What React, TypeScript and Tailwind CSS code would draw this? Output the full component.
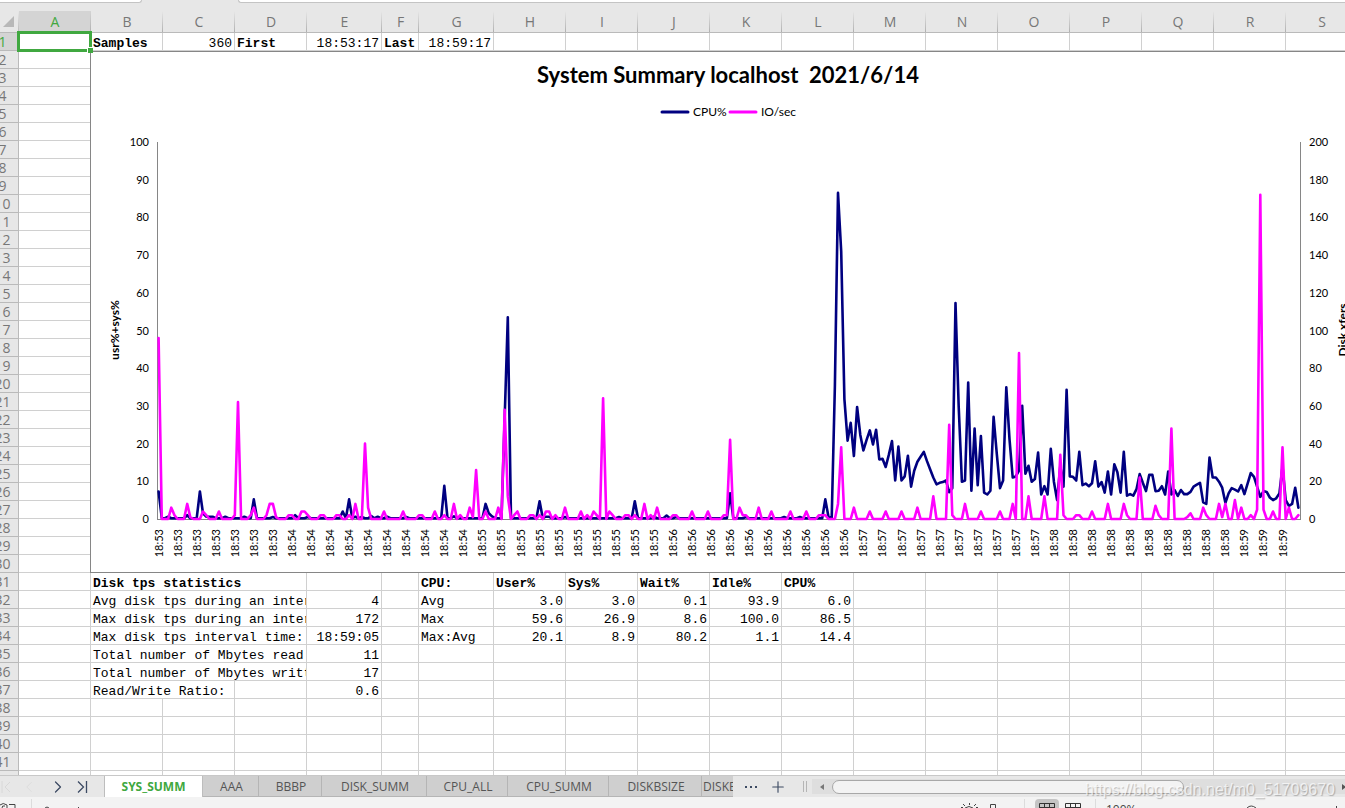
import { ReactNode } from "react";
import { ChevronLeft, ChevronRight, Plus } from "lucide-react";

const COLUMNS = [
  { name: "A", width: "w-[72px]" },
  { name: "B", width: "w-[72px]" },
  { name: "C", width: "w-[72px]" },
  { name: "D", width: "w-[72px]" },
  { name: "E", width: "w-[75px]" },
  { name: "F", width: "w-[37px]" },
  { name: "G", width: "w-[75px]" },
  ..."HIJKLMNOPQRS".split("").map((name) => ({ name, width: "w-[72px]" })),
];

const ROW_COUNT = 42;

type Cell = {
  text: string;
  bold?: boolean;
  right?: boolean;
  span?: number;
};

const label = (text: string, span = 1): Cell => ({ text, span });
const head = (text: string, span = 1): Cell => ({ text, span, bold: true });
const num = (text: string): Cell => ({ text, right: true });

const CELLS: Record<string, Cell> = {
  B1: head("Samples"),
  C1: num("360"),
  D1: head("First"),
  E1: num("18:53:17"),
  F1: head("Last"),
  G1: num("18:59:17"),

  B31: head("Disk tps statistics", 3),
  B32: label("Avg disk tps during an interval:", 3),
  E32: num("4"),
  B33: label("Max disk tps during an interval:", 3),
  E33: num("172"),
  B34: label("Max disk tps interval time:", 3),
  E34: num("18:59:05"),
  B35: label("Total number of Mbytes read:", 3),
  E35: num("11"),
  B36: label("Total number of Mbytes written:", 3),
  E36: num("17"),
  B37: label("Read/Write Ratio:", 2),
  E37: num("0.6"),

  G31: head("CPU:"),
  H31: head("User%"),
  I31: head("Sys%"),
  J31: head("Wait%"),
  K31: head("Idle%"),
  L31: head("CPU%"),
  G32: label("Avg"),
  H32: num("3.0"),
  I32: num("3.0"),
  J32: num("0.1"),
  K32: num("93.9"),
  L32: num("6.0"),
  G33: label("Max"),
  H33: num("59.6"),
  I33: num("26.9"),
  J33: num("8.6"),
  K33: num("100.0"),
  L33: num("86.5"),
  G34: label("Max:Avg"),
  H34: num("20.1"),
  I34: num("8.9"),
  J34: num("80.2"),
  K34: num("1.1"),
  L34: num("14.4"),
};

const SAMPLES = 360;

// transfers per second, only the samples that are not zero
const IO: Record<number, number> = {
  0: 96, 4: 6, 5: 2, 9: 8, 10: 1, 14: 4, 15: 2, 19: 4, 24: 2, 25: 62, 29: 2,
  30: 6, 34: 2, 35: 8, 36: 8, 37: 1, 41: 2, 42: 2, 45: 4, 46: 4, 47: 2, 51: 2,
  52: 2, 56: 2, 57: 2, 60: 2, 62: 8, 65: 40, 66: 6, 71: 4, 77: 4, 82: 2,
  83: 2, 87: 4, 90: 2, 93: 8, 95: 2, 98: 6, 99: 1, 100: 26, 103: 4, 107: 6,
  109: 58, 110: 12, 112: 2, 113: 4, 117: 2, 118: 2, 120: 2, 122: 4, 123: 4,
  125: 2, 128: 6, 133: 4, 135: 2, 137: 4, 138: 2, 140: 64, 142: 4, 143: 2,
  147: 2, 148: 2, 150: 2, 153: 8, 155: 2, 157: 6, 162: 2, 163: 2, 168: 4,
  173: 4, 178: 2, 179: 2, 180: 42, 183: 6, 184: 2, 185: 2, 189: 6, 193: 4,
  199: 4, 204: 4, 208: 2, 209: 2, 210: 2, 214: 8, 215: 38, 219: 6, 224: 4,
  229: 4, 234: 4, 239: 6, 244: 12, 249: 50, 250: 2, 254: 8, 259: 4, 265: 4,
  269: 8, 271: 88, 274: 12, 279: 12, 284: 34, 285: 2, 289: 2, 290: 2, 294: 4,
  299: 8, 304: 8, 305: 2, 309: 22, 314: 7, 315: 2, 319: 48, 324: 1, 325: 3,
  329: 6, 330: 2, 334: 8, 335: 1, 336: 8, 339: 10, 341: 6, 344: 2, 346: 5,
  347: 172, 348: 5, 351: 4, 354: 38, 356: 6, 359: 2,
};

// idle part of the run: the box sits near zero apart from these samples
const CPU_QUIET: Record<number, number> = {
  0: 7.3, 3: 0.6, 9: 1, 13: 7.3, 14: 1.5, 15: 0.6, 16: 0.6, 17: 0.6, 21: 0.6,
  27: 0.6, 30: 5.2, 36: 0.5, 43: 1, 47: 0.5, 58: 2, 60: 5.2, 62: 0.6, 64: 0.5,
  67: 0.8, 69: 0.6, 72: 0.6, 78: 0.5, 90: 8.8, 93: 0.7, 103: 4, 104: 1.5,
  105: 0.7, 109: 27, 110: 53.5, 120: 4.7, 122: 0.6, 123: 0.6, 128: 0.5,
  145: 0.5, 150: 4.7, 156: 0.6, 160: 0.9, 163: 0.5, 180: 6.8, 185: 0.5,
  197: 0.5, 202: 0.5, 210: 5.2, 211: 0.5,
};

// load starts at sample 213
const BUSY_START = 213;
const CPU_BUSY = [
  35.4, 86.5, 71, 31.8, 20.8, 25.5, 16.7, 29.7, 22.3, 18.2, 21, 23.5, 19.8,
  23.7, 15.8, 16, 13.8, 17, 20.7, 10.2, 19.2, 10.2, 11.3, 16.8, 8.6, 12.8,
  15.2, 16.5, 17.8, 15.4, 13.2, 11, 9.2, 9.6, 9.8, 10.2, 7.1, 8.2, 57.3, 29.8,
  9.9, 10.2, 36.2, 7.5, 24, 9, 22, 7, 6.5, 7.5, 27.1, 17.3, 8.2, 10.2, 34.9,
  21.2, 11, 11.3, 12.8, 30, 12, 14.1, 9.9, 10.6, 17.6, 6.5, 8.7, 6.5, 18.6,
  9.9, 5, 14, 8.6, 34.3, 11.3, 11.2, 10.2, 17.8, 9, 9.4, 8.7, 9.5, 15.3, 8.6,
  9.8, 7, 12.6, 6.5, 14.5, 12.4, 7, 17.8, 6.2, 6.6, 6.2, 7.9, 11.9, 9.6, 7.4,
  11.7, 11.7, 7.4, 7.5, 8.7, 6.5, 12.6, 6.5, 7.7, 6.1, 7.7, 6.6, 6.6, 7.2,
  8.6, 9.1, 9.6, 4.4, 4, 16.3, 11, 11, 9.9, 8.3, 4.3, 6.8, 8.2, 7.8, 7.3, 9,
  6.6, 9.4, 12.2, 11.2, 8.6, 5.9, 7.4, 7.2, 5.7, 5, 5.5, 6.8, 13.9, 5, 3.5, 4,
  8.3, 3,
];

const PLOT = { left: 67, right: 1210, top: 91, bottom: 468 };
const STEP = (PLOT.right - PLOT.left) / SAMPLES;

const xAt = (i: number) => PLOT.left + STEP * (i + 0.5);
const yAt = (pct: number) =>
  PLOT.bottom - ((PLOT.bottom - PLOT.top) * pct) / 100;

function toPoints(value: (i: number) => number) {
  return Array.from(
    { length: SAMPLES },
    (_, i) => `${xAt(i).toFixed(1)},${yAt(value(i)).toFixed(1)}`
  ).join(" ");
}

const cpuPoints = toPoints((i) =>
  i >= BUSY_START ? CPU_BUSY[i - BUSY_START] : CPU_QUIET[i] ?? 0.2
);
const ioPoints = toPoints((i) => (IO[i] ?? 0) / 2);

const ticks = Array.from({ length: 11 }, (_, i) => i * 10);
const timeLabels = Array.from({ length: SAMPLES / 6 }, (_, n) => ({
  i: n * 6,
  text: `18:${53 + Math.floor((n * 6 + 18) / 60)}`,
}));

function SummaryChart() {
  return (
    <figure className="absolute top-0 -left-px z-10 w-[1277px] h-[522px] bg-white border border-[#868686]">
      <svg
        className="block -m-px w-[1277px] h-[522px] font-[Lato,sans-serif]"
        viewBox="0 0 1277 522"
        role="img"
        aria-label="System Summary"
      >
        <text
          x="638"
          y="32"
          textAnchor="middle"
          className="text-[22px] font-bold whitespace-pre"
        >
          {"System Summary localhost  2021/6/14"}
        </text>

        <g strokeWidth="3" strokeLinecap="round">
          <line x1="572" x2="598" y1="61" y2="61" stroke="#000080" />
          <line x1="640" x2="666" y1="61" y2="61" stroke="#ff00ff" />
        </g>
        <g className="text-[12px]">
          <text x="603" y="65">CPU%</text>
          <text x="671" y="65">IO/sec</text>
        </g>

        <g stroke="#868686" shapeRendering="crispEdges">
          <line x1={67.5} x2={67.5} y1={91} y2={469} />
          <line x1={1210.5} x2={1210.5} y1={91} y2={469} />
          <line x1={67} x2={1211} y1={468.5} y2={468.5} />
        </g>

        <g className="text-[11px]">
          {ticks.map((t) => (
            <g key={t}>
              <text x="59" y={yAt(t) + 4} textAnchor="end">
                {t}
              </text>
              <text x="1219" y={yAt(t) + 4}>
                {t * 2}
              </text>
            </g>
          ))}
          {timeLabels.map(({ i, text }) => (
            <text
              key={i}
              textAnchor="end"
              transform={`translate(${xAt(i) + 4} 478) rotate(-90)`}
            >
              {text}
            </text>
          ))}
        </g>

        <g className="text-[12px] font-bold" textAnchor="middle">
          <text transform="translate(29 279) rotate(-90)">usr%+sys%</text>
          <text transform="translate(1257 279) rotate(-90)">Disk xfers</text>
        </g>

        <g fill="none" strokeWidth="2.6" strokeLinejoin="round" strokeLinecap="round">
          <polyline points={cpuPoints} stroke="#000080" />
          <polyline points={ioPoints} stroke="#ff00ff" />
        </g>
      </svg>
    </figure>
  );
}

function SheetRow({ row }: { row: number }) {
  const active = row === 1;
  const cells: ReactNode[] = [];

  for (let c = 0; c < COLUMNS.length; c++) {
    const key = `${COLUMNS[c].name}${row}`;
    const cell = CELLS[key];
    const span = cell?.span ?? 1;
    cells.push(
      <td
        key={key}
        colSpan={span}
        className={`relative p-0 border-r border-b border-[#d0d0d0] ${
          cell?.right ? "text-right" : "text-left"
        } ${cell?.bold ? "font-bold" : ""}`}
      >
        {cell && (
          <div className="h-[17px] pl-[2px] pr-[2px] overflow-hidden whitespace-nowrap leading-[21px]">
            {cell.text}
          </div>
        )}
        {key === "A1" && (
          <div className="absolute z-20 -top-[2px] -left-[2px] -right-[2px] -bottom-[2px] border-3 border-[#40a840]">
            <span className="absolute -right-[4px] -bottom-[4px] size-[6px] bg-[#40a840] border-t border-l border-white" />
          </div>
        )}
        {key === "B2" && <SummaryChart />}
      </td>
    );
    c += span - 1;
  }

  return (
    <tr className="h-[18px]">
      <th
        scope="row"
        className={`p-0 border-r border-b border-[#bababa] font-[Open_Sans,sans-serif] text-[14px] leading-[17px] font-normal ${
          active ? "bg-[#d4d4d4] text-[#40a840]" : "bg-[#e7e7e7] text-[#777]"
        }`}
      >
        <div className="h-[17px] overflow-hidden">{row}</div>
      </th>
      {cells}
    </tr>
  );
}

function Sheet() {
  return (
    <main className="relative flex-1 min-h-0 overflow-hidden bg-white">
      <table className="-ml-[13px] w-[1371px] table-fixed border-separate border-spacing-0 font-[Liberation_Mono,monospace] text-[13px] text-black">
        <colgroup>
          <col className="w-8" />
          {COLUMNS.map((c) => (
            <col key={c.name} className={c.width} />
          ))}
        </colgroup>
        <thead>
          <tr className="h-[22px] bg-[#e7e7e7] font-[Open_Sans,sans-serif] text-[14px] leading-[21px] text-[#777]">
            <td className="p-0 border-b border-[#bababa] bg-linear-to-b from-transparent to-[#bababa] bg-[length:1px_100%] bg-right bg-no-repeat">
              <svg className="ml-auto mr-[5px] size-[11px]" viewBox="0 0 11 11">
                <path d="M11 0V11H0z" fill="#b8b8b8" />
              </svg>
            </td>
            {COLUMNS.map((c) => (
              <th
                key={c.name}
                scope="col"
                className={`p-0 font-normal border-b border-[#bababa] bg-linear-to-b from-transparent to-[#b0b0b0] bg-[length:1px_100%] bg-right bg-no-repeat ${
                  c.name === "A" ? "bg-[#d4d4d4] text-[#40a840]" : ""
                }`}
              >
                {c.name}
              </th>
            ))}
          </tr>
        </thead>
        <tbody>
          {Array.from({ length: ROW_COUNT }, (_, i) => (
            <SheetRow key={i} row={i + 1} />
          ))}
        </tbody>
      </table>
    </main>
  );
}

const TABS = [
  { name: "AAA", width: "w-14" },
  { name: "BBBP", width: "w-[63px]" },
  { name: "DISK_SUMM", width: "w-[105px]" },
  { name: "CPU_ALL", width: "w-[81px]" },
  { name: "CPU_SUMM", width: "w-[101px]" },
  { name: "DISKBSIZE", width: "w-[93px]" },
];

function SheetTabs() {
  return (
    <nav className="flex h-[22px] shrink-0 bg-[#e7e7e7] border-t border-[#c8c8c8] font-[Open_Sans,sans-serif] text-[12px] text-[#555]">
      <div className="flex w-[104px] shrink-0 items-center text-[#3c4a63]">
        <button aria-label="First sheet" className="w-5 text-[#d8d8d8]">
          <svg className="size-4" viewBox="0 0 16 16" fill="none" stroke="currentColor">
            <path d="M2 2V14M10 3L5 8L10 13" />
          </svg>
        </button>
        <button aria-label="Previous sheet" className="w-6 text-[#d8d8d8]">
          <ChevronLeft size={18} strokeWidth={1} />
        </button>
        <button aria-label="Next sheet" className="w-[30px] pl-1">
          <ChevronRight size={20} strokeWidth={1.5} />
        </button>
        <button aria-label="Last sheet">
          <svg className="size-4" viewBox="0 0 16 16" fill="none" stroke="currentColor" strokeWidth="1.3">
            <path d="M4 2.500L9.500 8L4 13.500M12.500 2V14" />
          </svg>
        </button>
      </div>
      <button className="w-[99px] shrink-0 bg-white border-x border-[#bdbdbd] font-bold text-[#40a840]">
        SYS_SUMM
      </button>
      {TABS.map((t) => (
        <button
          key={t.name}
          className={`${t.width} shrink-0 pt-px pl-[2px] bg-[#cfcfcf] border-r border-[#b5b5b5] shadow-[inset_0_-1px_#b5b5b5]`}
        >
          {t.name}
        </button>
      ))}
      <button className="w-[31px] shrink-0 overflow-hidden pt-px pl-[1px] bg-[#cfcfcf] shadow-[inset_0_-1px_#b5b5b5] text-left">
        DISKBUSY
      </button>
      <button aria-label="More sheets" className="flex w-9 shrink-0 items-center justify-center">
        <svg className="w-4 h-1" viewBox="0 0 16 4" fill="#3c4a63">
          <path d="M2 1h2v2H2zM7 1h2v2H7zM12 1h2v2h-2z" />
        </svg>
      </button>
      <button aria-label="Add sheet" className="w-[18px] shrink-0 text-[#3c4a63]">
        <Plus size={18} strokeWidth={1.5} />
      </button>
      <div className="my-[5px] ml-4 mr-[5px] w-1 shrink-0 border-x border-[#b5b5b5]" />
      <div className="flex flex-1 items-center my-[3px] bg-[#dedede]">
        <button aria-label="Scroll left" className="flex w-5 shrink-0 justify-center">
          <svg className="size-[6px]" viewBox="0 0 6 6" fill="#777">
            <path d="M5 0V6L1 3z" />
          </svg>
        </button>
        <div className="h-[14px] w-[352px] shrink-0 rounded-full bg-[#f3f3f3] border border-[#a8a8a8]" />
        <button aria-label="Scroll right" className="ml-auto w-1 shrink-0 overflow-hidden">
          <svg className="w-[6px] h-[8px]" viewBox="0 0 6 8" fill="#555">
            <path d="M1 1V7L5 4z" />
          </svg>
        </button>
      </div>
    </nav>
  );
}

function GridIcon() {
  return (
    <svg className="mx-auto size-4" viewBox="0 0 16 16" fill="none" stroke="#333">
      <path d="M.5 4.500H15.500V15M.5 4.500V15M5.500 4.500V15M10.500 4.500V15M0 8.500H16" />
    </svg>
  );
}

function StatusBar() {
  return (
    <footer className="flex h-[11px] shrink-0 items-start overflow-hidden bg-[#f3f3f3] text-[#444]">
      <svg className="w-[100px] h-[11px] shrink-0" viewBox="0 0 100 11" fill="none" stroke="#444">
        <path d="M0 8Q3 5 7 8V11M2 11Q2 8 5 9M9 7.500H15V11" />
        <path d="M31.500 2V11" stroke="#dcdcdc" />
        <path d="M45 11Q47 9 49 11M78.500 10V11" />
      </svg>
      <svg className="ml-auto w-[90px] h-[11px] shrink-0" viewBox="0 0 90 11" fill="none" stroke="#444">
        <path d="M28 11Q32 8 36 11M32.500 6V8M26 7L28 9M39 7L37 9M24 10.500H26M39 10.500H41" />
        <path d="M53.500 11V7.500H58.500V11" />
        <path d="M87.500 2V11" stroke="#dcdcdc" />
      </svg>
      <button aria-label="Normal view" className="ml-2 mt-[2px] h-4 w-6 shrink-0 rounded-sm bg-[#c4c4c4]">
        <GridIcon />
      </button>
      <button aria-label="Page break view" className="ml-[2px] mt-[2px] h-4 w-6 shrink-0">
        <GridIcon />
      </button>
      <div className="mt-[2px] ml-[10px] h-4 w-px shrink-0 bg-[#dcdcdc]" />
      <span className="mt-[5px] ml-[10px] w-[141px] shrink-0 font-[Open_Sans,sans-serif] text-[12px] leading-4">
        100%
      </span>
      <svg className="w-[98px] h-[11px] shrink-0" viewBox="0 0 98 11" fill="none" stroke="#444">
        <path d="M0 11Q4 7 9 11M89.500 9V11" />
      </svg>
    </footer>
  );
}

export default function App() {
  return (
    <div className="relative flex h-screen flex-col overflow-hidden bg-[#e7e7e7]">
      <header className="flex h-[11px] shrink-0 items-start justify-between">
        <div className="h-[3px] w-[142px] shrink-0 rounded-br-md bg-white border-b border-r border-[#c4c4c4]" />
        <div className="ml-[96px] h-[3px] flex-1 rounded-bl-md bg-white border-b border-l border-[#c4c4c4]" />
      </header>
      <Sheet />
      <SheetTabs />
      <StatusBar />
      <div className="pointer-events-none absolute right-[10px] bottom-2 font-[Liberation_Sans,sans-serif] text-[16px] leading-5 text-white/70 [text-shadow:1px_1px_1px_rgba(0,0,0,0.25)]">
        https://blog.csdn.net/m0_51709670
      </div>
    </div>
  );
}
